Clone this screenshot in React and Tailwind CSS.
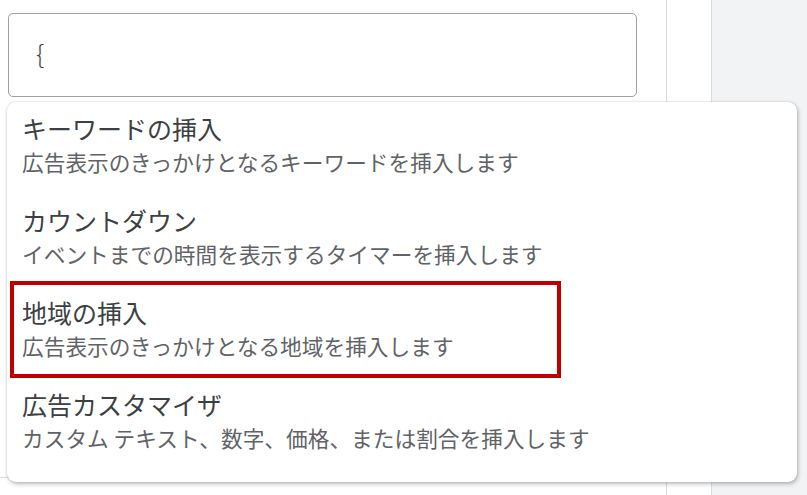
import React from "react";

const items = [
  { title: "キーワードの挿入", desc: "広告表示のきっかけとなるキーワードを挿入します" },
  { title: "カウントダウン", desc: "イベントまでの時間を表示するタイマーを挿入します" },
  { title: "地域の挿入", desc: "広告表示のきっかけとなる地域を挿入します", marked: true },
  { title: "広告カスタマイザ", desc: "カスタム テキスト、数字、価格、または割合を挿入します" },
];

function App() {
  return (
    <div
      className="relative w-[807px] h-[495px] overflow-hidden bg-white flex"
      style={{ fontFamily: '"Noto Sans CJK JP", "Noto Sans", sans-serif' }}
    >
      <div className="w-[667px] h-full border-r border-[#dadce0] pt-[13px] pl-[8px] pr-[29px]">
        <div className="h-[84px] rounded-[5px] border-[1.5px] border-[#9aa0a6] pl-[27px] pt-[22px] text-[26px] leading-[34px] font-light text-[#3c4043]">
          {"{"}
        </div>
      </div>
      <div className="w-[44px] h-full" />
      <div className="flex-1 h-full bg-[#f1f3f4] border-l border-[#dadce0]" />

      <div className="absolute left-0 top-[477px] w-[10px] border-t border-[#dadce0]" />

      <div className="absolute left-[7px] top-[102px] w-[790px] h-[380px] bg-white rounded-[9px] shadow-[1px_2px_4px_rgba(60,64,67,0.35),0_0_2px_rgba(60,64,67,0.2)] pb-[11px]">
        {items.map((it) => (
          <div key={it.title} className="relative px-[15px] pt-[10px] pb-[16px]">
            <div className="text-[25px] leading-[33px] text-[#3c4043]">{it.title}</div>
            <div className="text-[21.7px] leading-[33px] text-[#5f6368]">{it.desc}</div>
            {it.marked && (
              <div className="absolute left-[3px] top-[-5px] w-[551px] h-[97px] border-4 border-[#c00000]" />
            )}
          </div>
        ))}
      </div>
    </div>
  );
}

export default App;
